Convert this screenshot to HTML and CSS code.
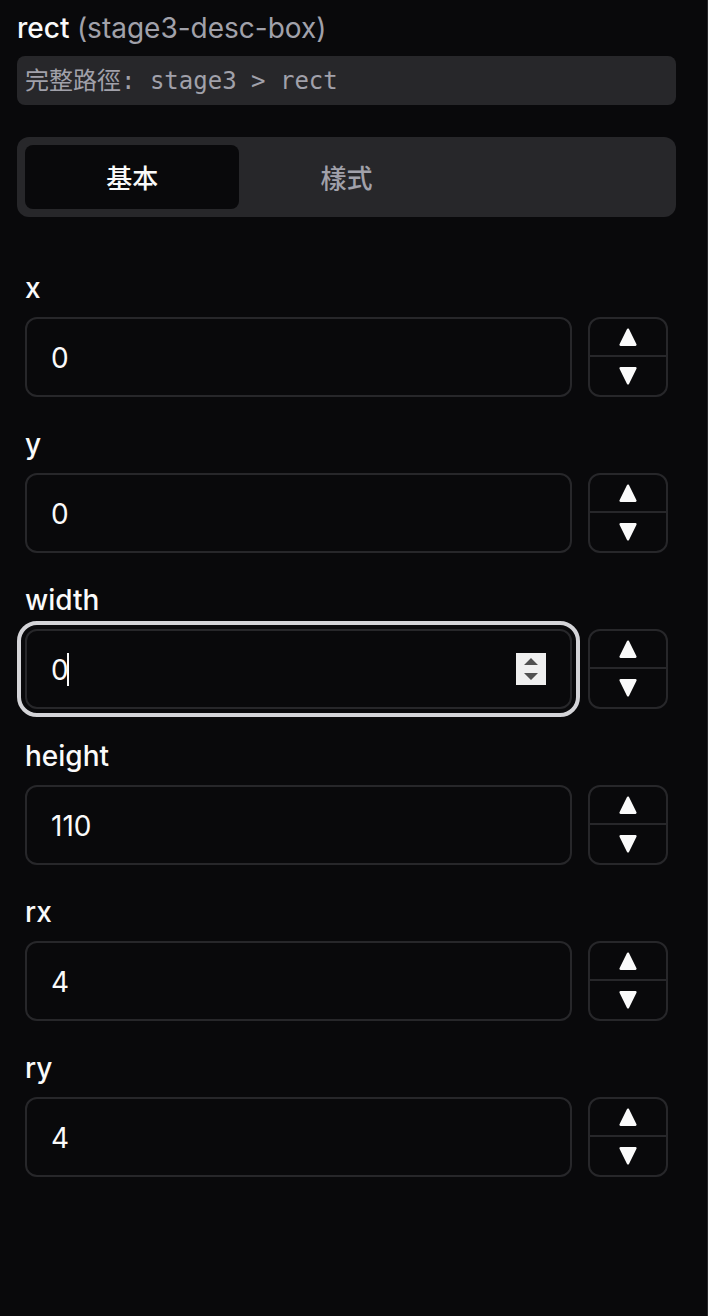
FILE: index.html
```html
<!DOCTYPE html>
<html lang="zh-Hant">
<head>
<meta charset="utf-8">
<meta name="viewport" content="width=device-width, initial-scale=1">
<title>rect</title>
<link rel="stylesheet" href="styles.css">
</head>
<body>
<svg class="symbols" aria-hidden="true">
  <symbol id="up" viewBox="0 0 18 18"><path d="M9 1.6 16.5 16.8H1.5Z" fill="currentColor" stroke="currentColor" stroke-width="2.2" stroke-linejoin="round"/></symbol>
  <symbol id="down" viewBox="0 0 18 18"><path d="M9 16.4 1.5 1.2H16.5Z" fill="currentColor" stroke="currentColor" stroke-width="2.2" stroke-linejoin="round"/></symbol>
</svg>
<main class="panel">
  <h1 class="title">rect <span class="title-id">(stage3-desc-box)</span></h1>
  <p class="path">完整路徑: stage3 &gt; rect</p>
  <div class="tabs" role="tablist">
    <button class="tab tab-active" type="button" role="tab" aria-selected="true">基本</button>
    <button class="tab" type="button" role="tab" aria-selected="false">樣式</button>
  </div>
  <form class="fields">
    <div class="field">
      <label class="label" for="x">x</label>
      <div class="row">
        <input class="input" id="x" type="number" value="0">
        <div class="stepper">
          <button class="step" type="button" aria-label="x +"><svg class="arrow"><use href="#up"/></svg></button>
          <button class="step" type="button" aria-label="x -"><svg class="arrow"><use href="#down"/></svg></button>
        </div>
      </div>
    </div>
    <div class="field">
      <label class="label" for="y">y</label>
      <div class="row">
        <input class="input" id="y" type="number" value="0">
        <div class="stepper">
          <button class="step" type="button" aria-label="y +"><svg class="arrow"><use href="#up"/></svg></button>
          <button class="step" type="button" aria-label="y -"><svg class="arrow"><use href="#down"/></svg></button>
        </div>
      </div>
    </div>
    <div class="field">
      <label class="label" for="width">width</label>
      <div class="row">
        <div class="focus-box">
          <input class="input input-focused" id="width" type="number" value="0">
          <span class="caret"></span>
          <svg class="spinner" viewBox="0 0 30 32" aria-hidden="true"><path d="M0 0H30V32H0Z" fill="#efefef"/><path d="M8 12 15 5 22 12ZM8 20H22L15 27Z" fill="#505050"/></svg>
        </div>
        <div class="stepper">
          <button class="step" type="button" aria-label="width +"><svg class="arrow"><use href="#up"/></svg></button>
          <button class="step" type="button" aria-label="width -"><svg class="arrow"><use href="#down"/></svg></button>
        </div>
      </div>
    </div>
    <div class="field">
      <label class="label" for="height">height</label>
      <div class="row">
        <input class="input" id="height" type="number" value="110">
        <div class="stepper">
          <button class="step" type="button" aria-label="height +"><svg class="arrow"><use href="#up"/></svg></button>
          <button class="step" type="button" aria-label="height -"><svg class="arrow"><use href="#down"/></svg></button>
        </div>
      </div>
    </div>
    <div class="field">
      <label class="label" for="rx">rx</label>
      <div class="row">
        <input class="input" id="rx" type="number" value="4">
        <div class="stepper">
          <button class="step" type="button" aria-label="rx +"><svg class="arrow"><use href="#up"/></svg></button>
          <button class="step" type="button" aria-label="rx -"><svg class="arrow"><use href="#down"/></svg></button>
        </div>
      </div>
    </div>
    <div class="field">
      <label class="label" for="ry">ry</label>
      <div class="row">
        <input class="input" id="ry" type="number" value="4">
        <div class="stepper">
          <button class="step" type="button" aria-label="ry +"><svg class="arrow"><use href="#up"/></svg></button>
          <button class="step" type="button" aria-label="ry -"><svg class="arrow"><use href="#down"/></svg></button>
        </div>
      </div>
    </div>
  </form>
</main>
</body>
</html>
```
FILE: styles.css
```css
* {
  box-sizing: border-box;
}

body {
  margin: 0;
  background: #09090b;
  color: #fafafa;
  font-family: Inter, "Noto Sans CJK TC", sans-serif;
}

button,
input {
  margin: 0;
  padding: 0;
  border: 0;
  background: transparent;
  color: inherit;
  font: inherit;
}

.symbols {
  display: none;
}

.panel {
  min-height: 100vh;
  padding: 8px 31px 32px 17px;
  border-right: 1px solid #27272a;
}

.title {
  margin: 0 0 8px;
  font-size: 28px;
  font-weight: 500;
  line-height: 40px;
}

.title-id {
  color: #a1a1aa;
  font-weight: 400;
}

.path {
  margin: 0 0 32px;
  padding: 9px 8px 7px;
  border-radius: 8px;
  background: #27272a;
  color: #a1a1aa;
  font-family: "DejaVu Sans Mono", "Noto Sans CJK TC", monospace;
  font-size: 24px;
  line-height: 33px;
}

.tabs {
  display: grid;
  grid-template-columns: repeat(3, 1fr);
  padding: 8px;
  border-radius: 12px;
  background: #27272a;
}

.tab {
  height: 64px;
  padding-bottom: 2px;
  border-radius: 8px;
  color: #a1a1aa;
  font-size: 26px;
  font-weight: 500;
}

.tab-active {
  background: #09090b;
  color: #fafafa;
}

.fields {
  display: flex;
  flex-direction: column;
  gap: 32px;
  padding: 56px 8px 0;
}

.field {
  display: flex;
  flex-direction: column;
  gap: 14px;
}

.label {
  font-size: 28px;
  font-weight: 500;
  line-height: 30px;
}

.row {
  display: flex;
  gap: 16px;
}

.input {
  flex: 1;
  min-width: 0;
  width: 100%;
  height: 80px;
  padding: 2px 24px 0;
  border: 2px solid #27272a;
  border-radius: 12px;
  font-size: 28px;
  appearance: textfield;
}

.input::-webkit-inner-spin-button {
  display: none;
}

.focus-box {
  position: relative;
  display: flex;
  flex: 1;
}

.input-focused {
  outline: 4px solid #d4d4d8;
  outline-offset: 4px;
}

.caret {
  position: absolute;
  top: 24px;
  left: 42px;
  width: 2px;
  height: 33px;
  background: #fafafa;
}

.spinner {
  position: absolute;
  top: 24px;
  right: 26px;
  width: 30px;
  height: 32px;
}

.stepper {
  display: grid;
  grid-template-rows: 1fr 1fr;
  width: 80px;
  border: 2px solid #27272a;
  border-radius: 12px;
}

.step {
  display: flex;
  align-items: center;
  justify-content: center;
}

.step:first-child {
  border-bottom: 2px solid #27272a;
}

.arrow {
  width: 18px;
  height: 18px;
}
```
